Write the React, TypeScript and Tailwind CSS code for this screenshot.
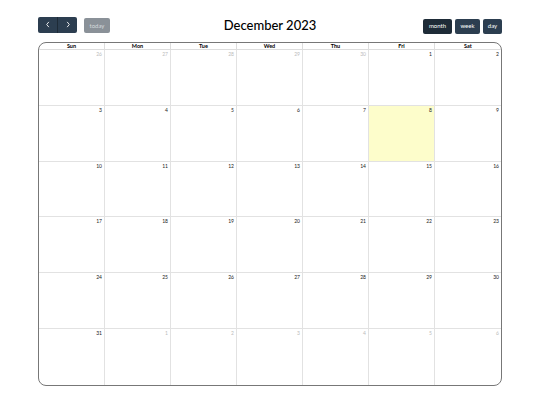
import React from "react";

const days = ["Sun", "Mon", "Tue", "Wed", "Thu", "Fri", "Sat"];

type Cell = { n: number; other: boolean; today?: boolean };

function buildWeeks(): Cell[][] {
  const cells: Cell[] = [];
  for (let d = 26; d <= 30; d++) cells.push({ n: d, other: true });
  for (let d = 1; d <= 31; d++) cells.push({ n: d, other: false, today: d === 8 });
  for (let d = 1; d <= 6; d++) cells.push({ n: d, other: true });
  const weeks: Cell[][] = [];
  for (let i = 0; i < cells.length; i += 7) weeks.push(cells.slice(i, i + 7));
  return weeks;
}

export default function App() {
  const weeks = buildWeeks();
  return (
    <div
      className="w-[540px] h-[405px] bg-white flex flex-col px-[38px] pt-[16px] pb-[19px] text-black"
      style={{ fontFamily: "Lato, 'Noto Sans', sans-serif" }}
    >
      {/* Toolbar */}
      <div className="flex items-center justify-between h-[17px]">
        <div className="flex items-center gap-[7px] w-[120px]">
          <div className="flex h-[16px] rounded-[2px] overflow-hidden bg-[#2c3e50] text-white">
            <button className="w-[20px] flex items-center justify-center border-r border-[#1e2b37]">
              <svg width="6" height="7" viewBox="0 0 6 8" fill="none" stroke="currentColor" strokeWidth="1">
                <path d="M4 1 L1.5 4 L4 7" />
              </svg>
            </button>
            <button className="w-[19px] flex items-center justify-center">
              <svg width="6" height="7" viewBox="0 0 6 8" fill="none" stroke="currentColor" strokeWidth="1">
                <path d="M2 1 L4.5 4 L2 7" />
              </svg>
            </button>
          </div>
          <button className="h-[15px] mt-[2px] w-[26px] rounded-[2px] bg-[#8a9198] text-[#d5d9dd] text-[6px] leading-none">
            today
          </button>
        </div>
        <h2 className="text-[13px] font-medium leading-none mt-[1px]">December 2023</h2>
        <div className="flex items-center gap-[3px] w-[120px] justify-end mt-[3px]">
          <button className="h-[15px] w-[29px] rounded-[2px] bg-[#1e2b37] text-white text-[6px] leading-none">month</button>
          <button className="h-[15px] w-[25px] rounded-[2px] bg-[#2c3e50] text-white text-[6px] leading-none">week</button>
          <button className="h-[15px] w-[19px] rounded-[2px] bg-[#2c3e50] text-white text-[6px] leading-none">day</button>
        </div>
      </div>

      {/* Calendar */}
      <div className="mt-[9px] flex-1 flex flex-col border border-[#777] rounded-[8px] overflow-hidden">
        <div className="grid grid-cols-7 h-[7px] border-b border-[#ddd]">
          {days.map((d, i) => (
            <div
              key={d}
              className={`text-[5.5px] font-bold leading-[7px] text-center ${i < 6 ? "border-r border-[#ddd]" : ""}`}
            >
              {d}
            </div>
          ))}
        </div>
        <div className="flex-1 grid grid-rows-6">
          {weeks.map((w, wi) => (
            <div key={wi} className={`grid grid-cols-7 ${wi < 5 ? "border-b border-[#e2e2e2]" : ""}`}>
              {w.map((c, ci) => (
                <div
                  key={ci}
                  className={`text-right pr-[2px] pt-[1px] text-[5px] leading-[6px] ${
                    ci < 6 ? "border-r border-[#e2e2e2]" : ""
                  } ${c.today ? "bg-[#fdfdcb]" : ""} ${c.other ? "text-[#bbb]" : "text-[#222]"}`}
                >
                  {c.n}
                </div>
              ))}
            </div>
          ))}
        </div>
      </div>
    </div>
  );
}
